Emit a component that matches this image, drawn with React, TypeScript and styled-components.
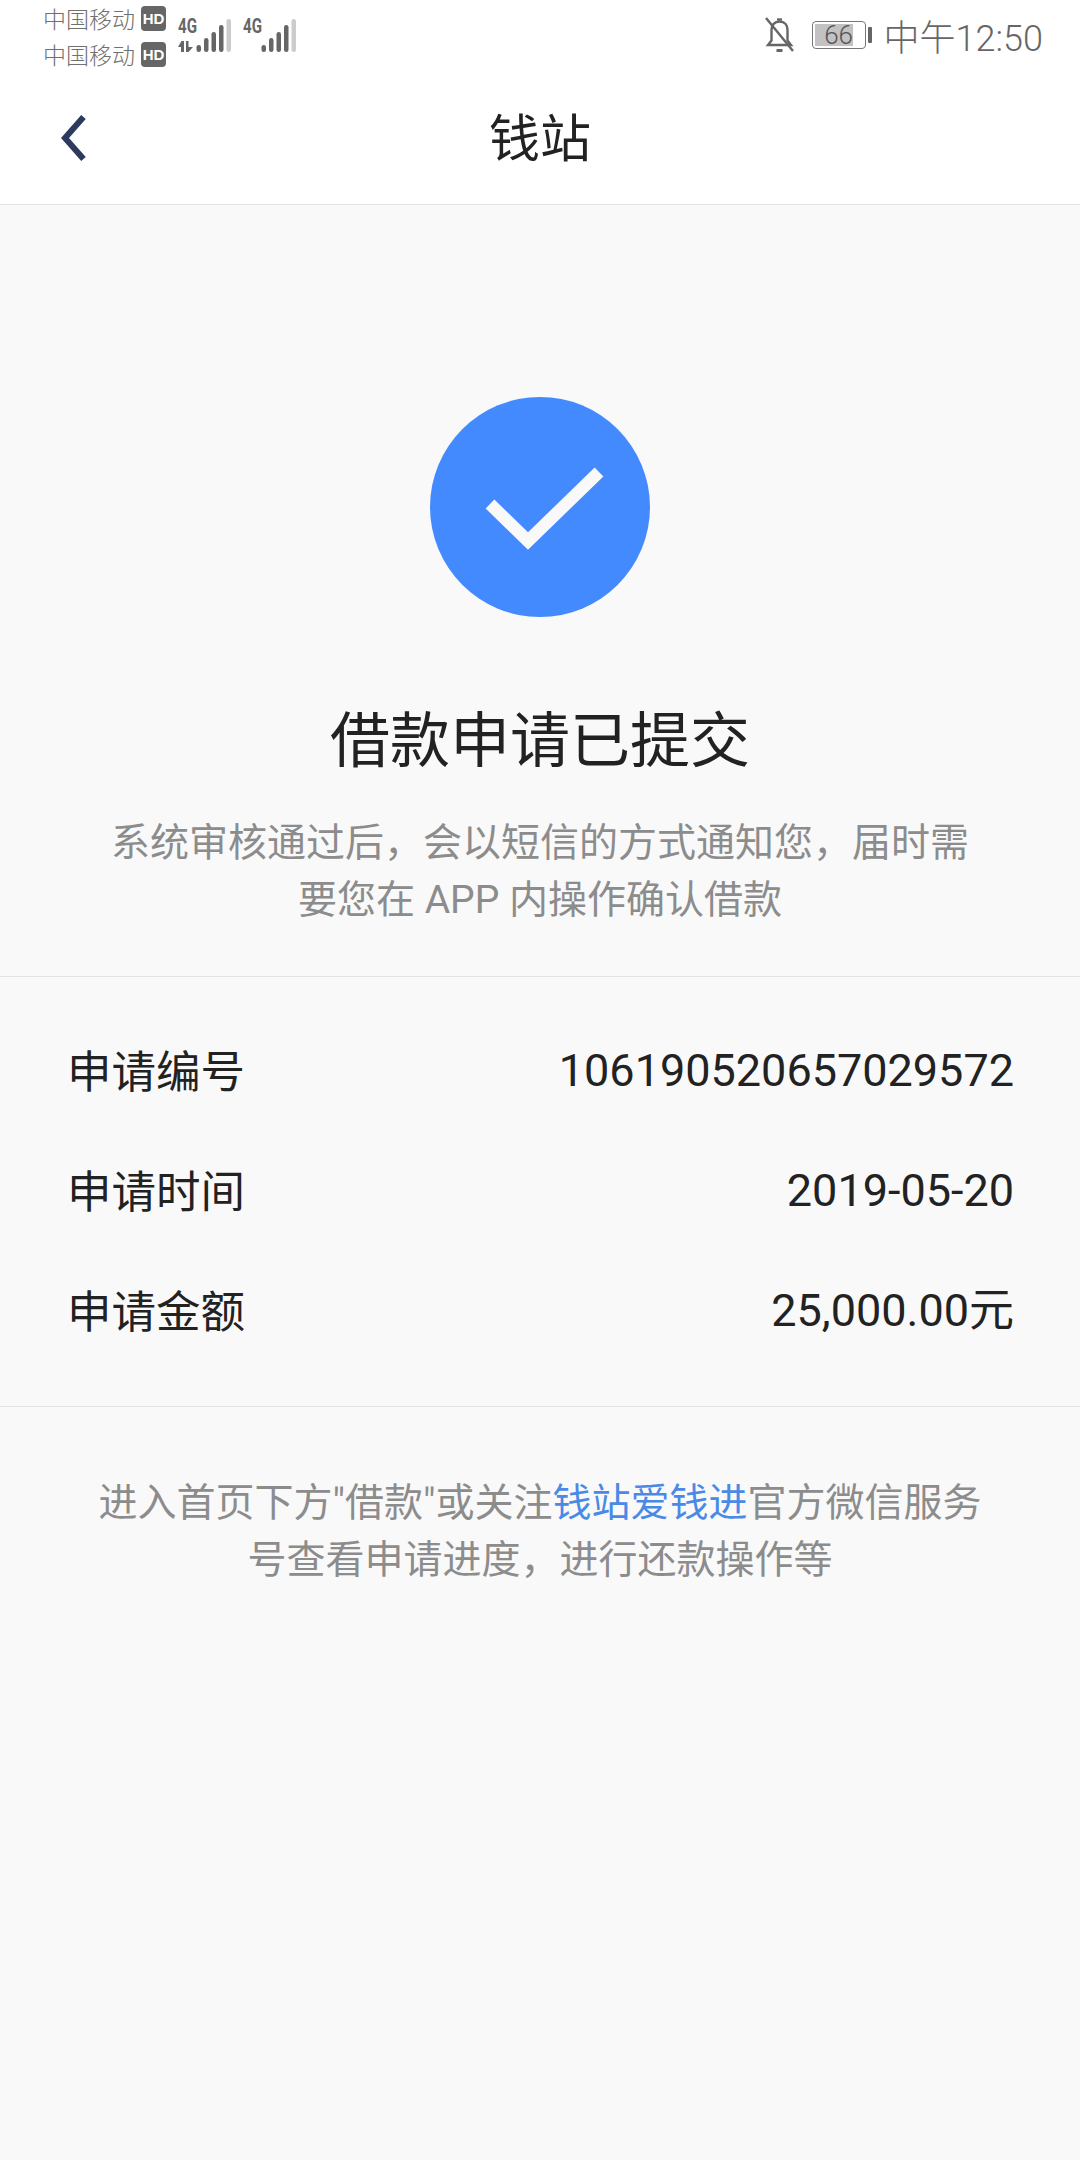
import React from "react";
import styled, { createGlobalStyle } from "styled-components";

const GlobalStyle = createGlobalStyle`
  html, body {
    margin: 0;
    padding: 0;
    background: #f9f9f9;
    font-family: Roboto, "Noto Sans CJK SC", sans-serif;
  }
`;

const SignalBars = () => (
  <>
    <rect x="18.500" y="27" width="4.500" height="7" rx="2.200" fill="#666" />
    <rect x="26" y="20" width="4.500" height="14" rx="2.200" fill="#666" />
    <rect x="33.500" y="14" width="4.500" height="20" rx="2.200" fill="#666" />
    <rect x="41" y="7" width="4.500" height="27" rx="2.200" fill="#666" />
    <rect x="48.500" y="1" width="4.500" height="33" rx="2.200" fill="#ccc" />
  </>
);

const NetworkLabel = () => (
  <text
    x="0"
    y="15"
    fontSize="20"
    fontWeight="700"
    fontFamily="Roboto, sans-serif"
    fill="#666"
    textLength="19"
    lengthAdjust="spacingAndGlyphs"
  >
    4G
  </text>
);

const App = () => {
  return (
    <Page>
      <GlobalStyle />
      <TopBar>
        <StatusBar>
          <CarrierBlock>
            <CarrierLine>
              中国移动<HdBadge>HD</HdBadge>
            </CarrierLine>
            <CarrierLine>
              中国移动<HdBadge>HD</HdBadge>
            </CarrierLine>
          </CarrierBlock>
          <SignalIcon>
            <svg width="56" height="44" viewBox="0 -8 56 44">
              <NetworkLabel />
              <path d="M0 29l3.500-6H6v11H3v-5zM8 23h2.500v6H15l-4.500 5H8z" fill="#666" />
              <SignalBars />
            </svg>
          </SignalIcon>
          <SignalIcon>
            <svg width="56" height="44" viewBox="0 -8 56 44">
              <NetworkLabel />
              <SignalBars />
            </svg>
          </SignalIcon>
          <StatusRight>
            <svg width="30" height="38" viewBox="0 0 30 38" fill="none" stroke="#666" strokeWidth="2.400">
              <path d="M3 29h23l-3.500-4.500V14c0-5-3-8.500-8-8.500S6.500 9 6.500 14v10.500z" />
              <path d="M12 3.500h5" />
              <path d="M11.500 34.500h6" strokeWidth="3" />
              <path d="M1 2l27 33" />
            </svg>
            <Battery>
              <BatteryShell>
                <BatteryFill />
                <BatteryText>66</BatteryText>
              </BatteryShell>
              <BatteryCap />
            </Battery>
            <Clock>中午12:50</Clock>
          </StatusRight>
        </StatusBar>
        <NavBar>
          <BackButton>
            <svg width="30" height="52" viewBox="0 0 30 52" fill="none">
              <path d="M25.500 5L7 26l18.500 21" stroke="#2c3a5e" strokeWidth="6" />
            </svg>
          </BackButton>
          <NavTitle>钱站</NavTitle>
        </NavBar>
      </TopBar>

      <ResultSection>
        <CheckCircle>
          <svg width="220" height="220" viewBox="0 0 220 220" fill="none">
            <path d="M60 107l38 37 71-69" stroke="#f9f9f9" strokeWidth="12.500" />
          </svg>
        </CheckCircle>
        <ResultTitle>借款申请已提交</ResultTitle>
        <ResultNote>系统审核通过后，会以短信的方式通知您，届时需要您在 APP 内操作确认借款</ResultNote>
      </ResultSection>

      <DetailSection>
        <DetailRow>
          <DetailLabel>申请编号</DetailLabel>
          <DetailValue>106190520657029572</DetailValue>
        </DetailRow>
        <DetailRow>
          <DetailLabel>申请时间</DetailLabel>
          <DetailValue>2019-05-20</DetailValue>
        </DetailRow>
        <DetailRow>
          <DetailLabel>申请金额</DetailLabel>
          <DetailValue>25,000.00元</DetailValue>
        </DetailRow>
      </DetailSection>

      <FooterNote>
        进入首页下方"借款"或关注<FooterLink>钱站爱钱进</FooterLink>官方微信服务号查看申请进度，进行还款操作等
      </FooterNote>
    </Page>
  );
};

export default App;

const Page = styled.div`
  width: 1080px;
  min-height: 2160px;
  background: #f9f9f9;
  overflow: hidden;
`;

const TopBar = styled.header`
  background: #fff;
  border-bottom: 1px solid #e3e3e3;
  height: 204px;
`;

const StatusBar = styled.div`
  display: flex;
  align-items: flex-start;
  height: 72px;
  padding: 0 37px 0 44px;
`;

const CarrierBlock = styled.div`
  display: flex;
  flex-direction: column;
  width: 134px;
`;

const CarrierLine = styled.div`
  display: flex;
  align-items: center;
  gap: 6px;
  height: 36px;
  margin-left: -1px;
  font-size: 23px;
  font-weight: 300;
  color: #707070;
  white-space: nowrap;
`;

const HdBadge = styled.span`
  display: inline-flex;
  align-items: center;
  justify-content: center;
  width: 25px;
  height: 25px;
  border-radius: 4px;
  background: #666;
  color: #fff;
  font-size: 15px;
  font-weight: 700;
  font-family: "Liberation Sans", sans-serif;
`;

const SignalIcon = styled.div`
  width: 65px;
  margin-top: 10px;
  svg {
    display: block;
  }
`;

const StatusRight = styled.div`
  display: flex;
  align-items: center;
  margin-left: auto;
  height: 70px;
  svg {
    display: block;
  }
`;

const Battery = styled.div`
  display: flex;
  align-items: center;
  gap: 2px;
  margin-left: 17px;
`;

const BatteryShell = styled.div`
  position: relative;
  display: flex;
  align-items: center;
  justify-content: center;
  box-sizing: border-box;
  width: 54px;
  height: 28px;
  border: 1.500px solid #777;
  border-radius: 4px;
`;

const BatteryFill = styled.div`
  position: absolute;
  left: 2px;
  top: 2px;
  bottom: 2px;
  width: 38px;
  background: #c2c2c2;
`;

const BatteryText = styled.span`
  position: relative;
  font-size: 26px;
  line-height: 25px;
  color: #555;
  font-weight: 300;
`;

const BatteryCap = styled.div`
  width: 4px;
  height: 16px;
  background: #666;
  border-radius: 1px;
`;

const Clock = styled.div`
  margin-left: 12px;
  font-size: 36px;
  font-weight: 300;
  color: #666;
  white-space: nowrap;
`;

const NavBar = styled.div`
  position: relative;
  display: flex;
  align-items: center;
  justify-content: center;
  height: 132px;
`;

const BackButton = styled.div`
  position: absolute;
  left: 58px;
  top: 40px;
  svg {
    display: block;
  }
`;

const NavTitle = styled.h1`
  margin: 0 0 6px;
  font-size: 51px;
  font-weight: 400;
  color: #222;
  font-family: "Noto Sans CJK SC", sans-serif;
`;

const ResultSection = styled.section`
  display: flex;
  flex-direction: column;
  align-items: center;
  height: 772px;
  box-sizing: border-box;
  padding-top: 192px;
  border-bottom: 1px solid #e3e3e3;
`;

const CheckCircle = styled.div`
  width: 220px;
  height: 220px;
  margin-left: -1px;
  border-radius: 50%;
  background: #448aff;
  svg {
    display: block;
  }
`;

const ResultTitle = styled.h2`
  margin: 76px 0 0;
  font-size: 60px;
  line-height: 86px;
  font-weight: 400;
  color: #222;
  font-family: "Noto Sans CJK SC", sans-serif;
`;

const ResultNote = styled.p`
  margin: 36px 0 0;
  width: 870px;
  text-align: center;
  font-size: 39px;
  line-height: 57px;
  font-weight: 400;
  color: #8c8c8c;
`;

const DetailSection = styled.section`
  display: flex;
  flex-direction: column;
  height: 430px;
  box-sizing: border-box;
  padding: 34px 66px 0 67px;
  border-bottom: 1px solid #e3e3e3;
`;

const DetailRow = styled.div`
  display: flex;
  justify-content: space-between;
  align-items: center;
  height: 120px;
  color: #222;
`;

const DetailLabel = styled.span`
  margin-bottom: 5px;
  font-size: 44.500px;
  font-family: "Noto Sans CJK SC", sans-serif;
  line-height: 60px;
`;

const DetailValue = styled.span`
  font-size: 45px;
  line-height: 60px;
`;

const FooterNote = styled.p`
  margin: 68px auto 0;
  width: 900px;
  text-align: center;
  font-size: 39px;
  line-height: 57px;
  font-weight: 400;
  color: #8c8c8c;
`;

const FooterLink = styled.span`
  color: #4a8ae6;
`;
